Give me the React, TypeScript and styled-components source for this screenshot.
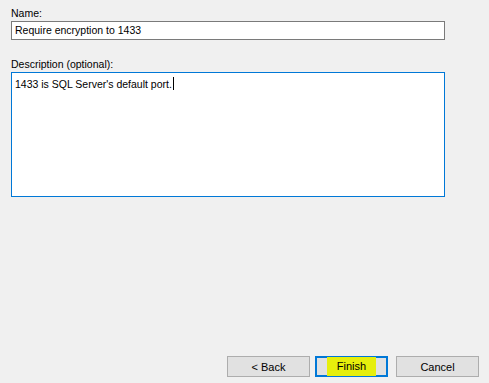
import React from "react";
import styled, { createGlobalStyle } from "styled-components";

const Global = createGlobalStyle`
  html, body { margin: 0; padding: 0; background: #f0f0f0; }
  body { font-family: "Liberation Sans", Arial, sans-serif; font-size: 10.5px; color: #000; }
`;

const Page = styled.div`
  width: 489px;
  height: 383px;
  box-sizing: border-box;
  padding: 4px 44px 6px 11px;
  display: flex;
  flex-direction: column;
  overflow: hidden;
`;

const Label = styled.div`
  height: 17px;
  line-height: 19px;
`;

const Field = styled.div<{ $focused?: boolean; $tall?: boolean }>`
  box-sizing: border-box;
  width: 434px;
  height: ${(p) => (p.$tall ? "125px" : "19px")};
  background: #fff;
  border: 1px solid ${(p) => (p.$focused ? "#0078d7" : "#7a7a7a")};
  padding: ${(p) => (p.$tall ? "3px 3px" : "0 3px")};
  line-height: 17px;
  white-space: nowrap;
`;

const Caret = styled.span`
  display: inline-block;
  width: 1px;
  height: 13px;
  background: #000;
  vertical-align: -2px;
  margin-left: 1px;
`;

const Gap = styled.div<{ $h: number }>`
  height: ${(p) => p.$h}px;
`;

const ButtonRow = styled.div`
  margin-top: auto;
  margin-right: -34px;
  display: flex;
  justify-content: flex-end;
`;

const Button = styled.div<{ $default?: boolean; $w: number; $ml: number }>`
  box-sizing: border-box;
  width: ${(p) => p.$w}px;
  margin-left: ${(p) => p.$ml}px;
  height: 21px;
  background: #e1e1e1;
  border: ${(p) => (p.$default ? "2px solid #0078d7" : "1px solid #adadad")};
  display: flex;
  align-items: center;
  justify-content: center;
  font-size: 11px;
`;

const Highlight = styled.span`
  background: #e6ef0c;
  padding: 2px 10px;
  line-height: 15px;
`;

export default function App() {
  return (
    <>
      <Global />
      <Page>
        <Label>Name:</Label>
        <Field>Require encryption to 1433</Field>
        <Gap $h={15} />
        <Label>Description (optional):</Label>
        <Field $focused $tall>
          1433 is SQL Server's default port.
          <Caret />
        </Field>
        <ButtonRow>
          <Button $w={83} $ml={0}>&lt; Back</Button>
          <Button $default $w={73} $ml={5}>
            <Highlight>Finish</Highlight>
          </Button>
          <Button $w={83} $ml={8}>Cancel</Button>
        </ButtonRow>
      </Page>
    </>
  );
}
